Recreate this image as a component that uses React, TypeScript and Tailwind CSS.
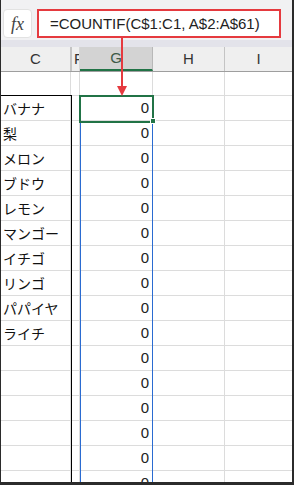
import React from "react";

const items = ["バナナ", "梨", "メロン", "ブドウ", "レモン", "マンゴー", "イチゴ", "リンゴ", "パパイヤ", "ライチ"];
const rows = Array.from({ length: 16 }, (_, i) => items[i] ?? "");

export default function App() {
  return (
    <div className="relative w-[294px] h-[485px] overflow-hidden bg-white border-l border-r-2 border-b-[3px] border-[#2b2b2b] font-['Liberation_Sans',sans-serif]">
      {/* formula bar */}
      <div className="h-[40px] bg-[#f1f1f3] flex items-start pt-[9px] pl-[2px]">
        <div className="w-[29px] h-[29px] bg-white border border-[#e2e2e2] rounded-[4px] flex items-center justify-center">
          <span className="font-['Liberation_Serif',serif] italic text-[18px] text-[#444] leading-none">fx</span>
        </div>
        <div className="ml-[5px] w-[244px] h-[29px] border-2 border-[#e53a3f] bg-white flex items-center pl-[11px]">
          <span className="text-[15px] text-[#222] leading-none whitespace-nowrap">=COUNTIF(C$1:C1, A$2:A$61)</span>
        </div>
      </div>
      <div className="h-[7px] bg-[#e3e3ea]" />
      {/* header */}
      <div className="flex h-[25px] border-b border-[#9e9e9e] bg-[#efefef] text-[15px] text-[#333]">
        <div className="w-[70px] border-r border-[#c4c4c4] flex items-center justify-center">C</div>
        <div className="w-[9px] border-r border-[#d6d6d6] pl-[2px] border-l border-l-[#c4c4c4] flex items-center overflow-hidden">F</div>
        <div className="w-[73px] bg-[#d3d3d3] border-r border-[#b8b8b8] border-b-2 border-b-[#217346] flex items-center justify-center text-[#3c5a48]">G</div>
        <div className="w-[72px] border-r border-[#c4c4c4] flex items-center justify-center">H</div>
        <div className="w-[67px] flex items-center justify-center">I</div>
      </div>
      {/* body */}
      <div className="flex flex-col">
        <div className="flex h-[24px] border-b border-[#dcdcdc]">
          <div className="w-[70px] border-r border-[#dcdcdc]" />
          <div className="w-[9px] border-r border-[#dcdcdc]" />
          <div className="w-[73px] border-r border-[#dcdcdc]" />
          <div className="w-[72px] border-r border-[#dcdcdc]" />
          <div className="w-[67px]" />
        </div>
        {rows.map((name, i) => (
          <div key={i} className="flex h-[25px] border-b border-[#dcdcdc] shrink-0">
            <div className="w-[70px] border-r border-[#dcdcdc] flex items-center pl-[2px] font-['Noto_Sans_CJK_JP',sans-serif] text-[14px] text-[#111] whitespace-nowrap">
              {name}
            </div>
            <div className="w-[9px] border-r border-[#dcdcdc]" />
            <div className="w-[73px] border-r border-[#dcdcdc] flex items-center justify-end pr-[3px] text-[15px] text-[#222]">0</div>
            <div className="w-[72px] border-r border-[#dcdcdc]" />
            <div className="w-[67px]" />
          </div>
        ))}
      </div>

      {/* black border box on column C */}
      <div className="absolute left-0 top-[95px] w-[71px] h-[400px] border-t border-r border-black" />
      {/* blue range */}
      <div className="absolute left-[79px] top-[121px] w-[73px] h-[400px] border-l border-r border-[#2a6bd1]" />
      {/* green selection */}
      <div className="absolute left-[78px] top-[95px] w-[75px] h-[28px] border-2 border-[#217346]" />
      <div className="absolute left-[149px] top-[118px] w-[6px] h-[6px] bg-[#217346] border border-white" />
      {/* red arrow */}
      <div className="absolute left-[120px] top-[38px] w-[2px] h-[50px] bg-[#e53a3f]" />
      <svg className="absolute left-[116px] top-[86px]" width="10" height="10" viewBox="0 0 10 10">
        <polygon points="0,0 10,0 5,10" fill="#e53a3f" />
      </svg>
    </div>
  );
}
